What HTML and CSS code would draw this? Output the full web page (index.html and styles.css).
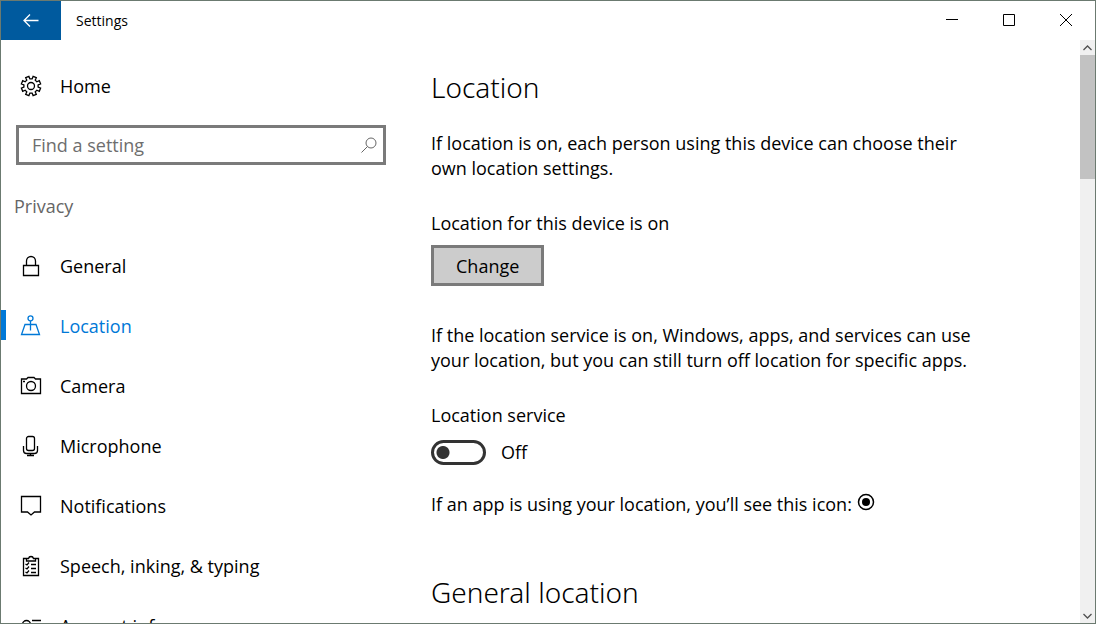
FILE: index.html
```html
<!DOCTYPE html>
<html lang="en">
<head>
<meta charset="utf-8">
<meta name="viewport" content="width=device-width, initial-scale=1">
<title>Settings</title>
<link rel="stylesheet" href="styles.css">
</head>
<body>
<div class="window">
  <header class="titlebar">
    <button class="back" aria-label="Back"><svg width="16" height="14" viewBox="0 0 16 14"><path d="M15.500 6.500H1M7 .5l-6 6 6 6"/></svg></button>
    <span class="app-name">Settings</span>
    <div class="controls">
      <button aria-label="Minimize"><svg width="12" height="12" viewBox="0 0 12 12"><path d="M0 5.500h12"/></svg></button>
      <button aria-label="Maximize"><svg width="12" height="12" viewBox="0 0 12 12"><path d="M.5.5h11v11H.5z"/></svg></button>
      <button aria-label="Close"><svg width="12" height="12" viewBox="0 0 12 12"><path d="M0 0l12 12M12 0L0 12"/></svg></button>
    </div>
  </header>
  <div class="body">
    <nav class="sidebar">
      <a class="item" href="#home">
        <svg width="22" height="22" viewBox="0 0 22 22"><path d="M18.100 9.900V12.100L20.600 13.100 19.300 16.300 16.800 15.200 15.200 16.800 16.300 19.300 13.100 20.600 12.100 18.100H9.900L8.900 20.600 5.700 19.300 6.800 16.800 5.200 15.200 2.700 16.300 1.400 13.100 3.900 12.100V9.900L1.400 8.900 2.700 5.700 5.200 6.800 6.800 5.200 5.700 2.700 8.900 1.400 9.900 3.900H12.100L13.100 1.400 16.300 2.700 15.200 5.200 16.800 6.800 19.300 5.700 20.600 8.900z"/><circle cx="11" cy="11" r="3.500"/></svg>
        <span>Home</span>
      </a>
      <label class="search">
        <input type="search" placeholder="Find a setting" aria-label="Find a setting">
        <svg width="16" height="16" viewBox="0 0 16 16"><circle cx="10" cy="6" r="5"/><path d="M6.500 9.500L.5 15.500"/></svg>
      </label>
      <h2 class="group">Privacy</h2>
      <a class="item" href="#general">
        <svg width="22" height="22" viewBox="0 0 22 22"><path d="M3.500 10.500h15v10h-15zM6.500 10.500V6a4.500 4.500 0 0 1 9 0v4.500"/></svg>
        <span>General</span>
      </a>
      <a class="item selected" href="#location" aria-current="page">
        <svg width="22" height="22" viewBox="0 0 22 22"><circle cx="10.500" cy="3.300" r="2.500"/><path d="M10.500 6v9.500M5 9.500h11l3.500 10h-18z"/></svg>
        <span>Location</span>
      </a>
      <a class="item" href="#camera">
        <svg width="22" height="22" viewBox="0 0 22 22"><path d="M1.500 4h5l1.500-1.500h6L15.500 4h5v14.500h-19z"/><circle cx="11" cy="11" r="4.500"/><path d="M3 6.500h2"/></svg>
        <span>Camera</span>
      </a>
      <a class="item" href="#microphone">
        <svg width="22" height="22" viewBox="0 0 22 22"><rect x="6.500" y="1.500" width="8" height="14" rx="2"/><path d="M3.500 11v4.500q0 3 3 3h8q3 0 3-3V11M10.500 18.500v2M7 20.500h7"/></svg>
        <span>Microphone</span>
      </a>
      <a class="item" href="#notifications">
        <svg width="22" height="22" viewBox="0 0 22 22"><path d="M1.500 1.500h19v15.500h-6L11 20l-3.500-3h-6z"/></svg>
        <span>Notifications</span>
      </a>
      <a class="item" href="#speech">
        <svg width="22" height="22" viewBox="0 0 22 22"><path d="M7 3.500H3.500v17h15v-17H15M6.500 6v-2.500h2q.5-2 2.500-2t2.500 2h2V6zM11 9.500h5M11 13.500h5M11 17.500h5M5.500 9l1.500 1 2-2.500M5.500 13l1.500 1 2-2.500M5.500 17l1.500 1 2-2.500"/></svg>
        <span>Speech, inking, &amp; typing</span>
      </a>
      <a class="item" href="#account">
        <svg width="22" height="22" viewBox="0 0 22 22"><circle cx="6.500" cy="9.500" r="4"/><path d="M.5 22q0-8.500 6-8.500t6 8.500M12 5.500h9M14 11.500h7M14 17.500h7"/></svg>
        <span>Account info</span>
      </a>
    </nav>
    <main class="content">
      <h1>Location</h1>
      <p>If location is on, each person using this device can choose their own location settings.</p>
      <div class="setting">
        <p>Location for this device is on</p>
        <button class="change">Change</button>
      </div>
      <p>If the location service is on, Windows, apps, and services can use your location, but you can still turn off location for specific apps.</p>
      <div class="service">
        <p id="service-label">Location service</p>
        <label class="toggle"><input type="checkbox" role="switch" aria-labelledby="service-label"><span>Off</span></label>
      </div>
      <p class="hint">If an app is using your location, you’ll see this icon: <svg width="18" height="18" viewBox="0 0 18 18"><circle class="ring" cx="9" cy="9" r="7.500"/><circle cx="9" cy="9" r="4"/></svg></p>
      <h1>General location</h1>
    </main>
    <div class="scrollbar">
      <button aria-label="Scroll up"><svg width="9" height="6" viewBox="0 0 9 6"><path d="M.5 5l4-4 4 4"/></svg></button>
      <div class="track"><div class="thumb"></div></div>
      <button aria-label="Scroll down"><svg width="9" height="6" viewBox="0 0 9 6"><path d="M.5 1l4 4 4-4"/></svg></button>
    </div>
  </div>
</div>
</body>
</html>
```
FILE: styles.css
```css
* { box-sizing: border-box; }
body {
  margin: 0;
  font: 18px/25px "Open Sans", "Noto Sans", sans-serif;
  color: #000;
  background: #fff;
}
h1, h2, p { margin: 0; }
button, input { font: inherit; color: inherit; }
button { border: 0; padding: 0; background: none; }
svg { fill: none; stroke: currentColor; stroke-width: 1.3; flex: none; }

.window {
  height: 100vh;
  display: flex;
  flex-direction: column;
  overflow: hidden;
  border: 1px solid #6b7a70;
}
.titlebar { display: flex; align-items: stretch; flex: none; height: 39px; }
.back {
  width: 60px;
  display: grid;
  place-items: center;
  color: #fff;
  background: #005a9e;
}
.app-name { align-self: center; padding-left: 15px; font-size: 14px; }
.controls { display: flex; margin-left: auto; padding: 0 1px 1px 0; }
.controls button { width: 57px; display: grid; place-items: center; }
.controls svg { stroke-width: 1; }

.body { flex: 1; min-height: 0; display: flex; }
.sidebar { flex: none; width: 400px; padding-top: 16px; overflow: hidden; }
.item {
  display: flex;
  align-items: center;
  gap: 18px;
  height: 60px;
  padding-left: 19px;
  color: #000;
  text-decoration: none;
}
.item.selected {
  color: #0078d7;
  background: linear-gradient(#0078d7, #0078d7) left 14px / 5px 30px no-repeat;
}
.search {
  display: flex;
  align-items: center;
  height: 40px;
  margin: 9px 15px 0;
  padding: 0 6px 0 13px;
  border: 3px solid #7a7a7a;
  color: #666;
}
.search svg { stroke-width: 1; }
.search input {
  flex: 1;
  min-width: 0;
  padding: 0;
  border: 0;
  outline: 0;
  background: none;
  appearance: none;
}
.search input::placeholder { color: #6e6e6e; opacity: 1; }
.group {
  padding: 29px 0 17px 13px;
  font-size: 18px;
  font-weight: 400;
  line-height: 25px;
  color: #666;
}

.content { flex: 1; min-width: 0; padding: 27px 100px 0 30px; overflow: hidden; }
.content h1 {
  margin-bottom: 24px;
  font: 300 28px/40px "Noto Sans", "Open Sans", sans-serif;
}
.setting { margin: 30px 0 37px; }
.change {
  height: 41px;
  margin-top: 9px;
  padding: 1px 22px 0;
  border: 3px solid #7a7a7a;
  background: #ccc;
}
.service { margin: 30px 0 27px; }
.toggle { display: flex; align-items: center; gap: 15px; margin-top: 12px; }
.toggle input {
  appearance: none;
  width: 55px;
  height: 25px;
  margin: 0;
  border: 3px solid #333;
  border-radius: 13px;
  background: radial-gradient(circle at 9px 50%, #333 6px, transparent 7px);
}
.hint { margin-bottom: 55px; }
.hint circle { fill: #000; stroke: none; }
.hint .ring { fill: none; stroke: #000; stroke-width: 1.5; }

.scrollbar {
  flex: none;
  display: flex;
  flex-direction: column;
  width: 15px;
  color: #505050;
  background: #f0f0f0;
}
.scrollbar button { height: 15px; display: grid; place-items: center; }
.track { flex: 1; }
.thumb { height: 22.5%; background: #c2c2c2; }
```
